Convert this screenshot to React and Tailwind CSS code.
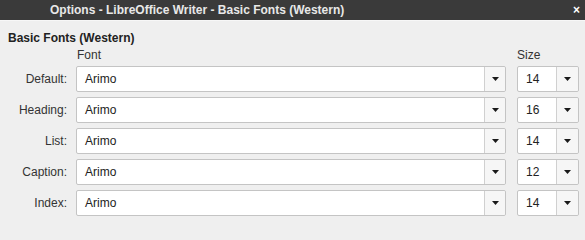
import React from "react";

const rows = [
  { label: "Default:", font: "Arimo", size: "14" },
  { label: "Heading:", font: "Arimo", size: "16" },
  { label: "List:", font: "Arimo", size: "14" },
  { label: "Caption:", font: "Arimo", size: "12" },
  { label: "Index:", font: "Arimo", size: "14" },
];

function Arrow() {
  return (
    <svg width="7" height="4" viewBox="0 0 7 4" className="block">
      <polygon points="0,0 7,0 3.5,4" fill="#1a1a1a" />
    </svg>
  );
}

function Combo({ value, fieldW, btnW }) {
  return (
    <div className="flex h-[26px] rounded-[2px] border border-[#c4c4c4] bg-white">
      <div className={`${fieldW} flex items-center pl-[8px] text-[12px] text-[#222]`}>{value}</div>
      <div className={`${btnW} flex items-center justify-center border-l border-[#d0d0d0] bg-[#f6f6f6] rounded-r-[2px]`}>
        <Arrow />
      </div>
    </div>
  );
}

export default function App() {
  return (
    <div
      className="w-[585px] h-[240px] bg-[#efefef] overflow-hidden"
      style={{ fontFamily: '"Liberation Sans", Arimo, Arial, sans-serif' }}
    >
      <div className="relative h-[20px] bg-[#3a3a3a] flex items-center pl-[50px]">
        <span className="text-[12px] font-bold text-[#e8e8e8] leading-[14px]">
          Options - LibreOffice Writer - Basic Fonts (Western)
        </span>
        <span className="absolute right-[5px] top-[3px] text-[12px] font-bold text-white leading-[14px]">×</span>
      </div>
      <div className="h-px bg-[#f7f7f7]" />
      <div className="pl-[8px] pt-[10px]">
        <div className="text-[12px] font-bold leading-[14px] text-[#222]">Basic Fonts (Western)</div>
        <div className="flex mt-[3px] text-[12px] leading-[14px] text-[#333]">
          <div className="w-[69px] shrink-0" />
          <div className="w-[440px] shrink-0">Font</div>
          <div>Size</div>
        </div>
        <div className="mt-[4px] flex flex-col gap-[5px]">
          {rows.map((r) => (
            <div key={r.label} className="flex items-center">
              <div className="w-[59px] shrink-0 text-right text-[12px] text-[#333] leading-[14px]">{r.label}</div>
              <div className="w-[9px] shrink-0" />
              <div className="w-[430px] shrink-0">
                <Combo value={r.font} fieldW="w-[407px]" btnW="w-[21px]" />
              </div>
              <div className="w-[11px] shrink-0" />
              <div className="w-[62px] shrink-0">
                <Combo value={r.size} fieldW="w-[38px]" btnW="w-[22px]" />
              </div>
            </div>
          ))}
        </div>
      </div>
    </div>
  );
}
